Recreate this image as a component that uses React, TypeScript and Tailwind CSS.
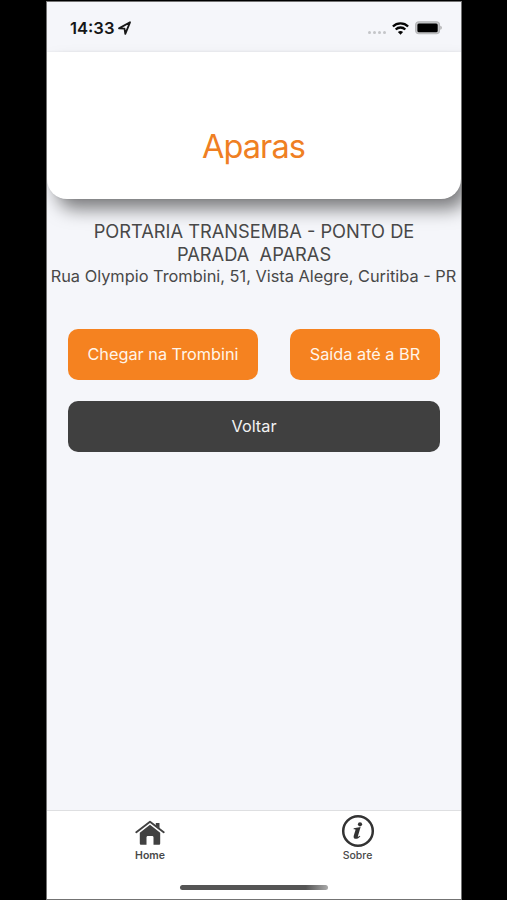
import React from "react";

function StatusBar() {
  return (
    <header className="flex h-[50px] shrink-0 items-center justify-between bg-[#f5f6fa] pt-[2px] pr-[19px] pl-[23px]">
      <div className="flex items-center gap-1">
        <span className="text-[16.6px] leading-5 font-semibold text-[#171717]">14:33</span>
        <svg width="13" height="14" viewBox="0 0 13 14" fill="none" stroke="#171717" strokeWidth="1.8" strokeLinejoin="round">
          <path d="M1 7.4 12 1.3 7.3 12.8 6.5 7.6Z" />
        </svg>
      </div>
      <div className="flex items-center">
        <div className="mt-2 mr-[6px] flex gap-[2px]">
          <i className="size-[3px] rounded-full bg-[#c4c5c8]" />
          <i className="size-[3px] rounded-full bg-[#c4c5c8]" />
          <i className="size-[3px] rounded-full bg-[#c4c5c8]" />
          <i className="size-[3px] rounded-full bg-[#c4c5c8]" />
        </div>
        <svg className="mr-[6px]" width="17" height="13" viewBox="0 0 17 13" fill="none" stroke="#050505" strokeWidth="2.3">
          <path d="M.9 4.5a10.8 10.8 0 0 1 15.2 0M3.7 7.5a6.8 6.8 0 0 1 9.6 0" />
          <path d="M8.5 12.7 5.9 10.1a3.8 3.8 0 0 1 5.2 0Z" fill="#050505" stroke="none" />
        </svg>
        <svg width="27" height="14" viewBox="0 0 27 14">
          <rect x=".6" y=".8" width="23.9" height="12" rx="3.2" fill="#c5c6c8" stroke="#b5b6b8" strokeWidth="1.1" />
          <rect x="2.4" y="2.4" width="20.3" height="8.9" rx="1.5" fill="#000" />
          <path d="M25.3 4.8c2 .7 2 3.3 0 4Z" fill="#aaa" />
        </svg>
      </div>
    </header>
  );
}

function HomeIcon() {
  return (
    <svg width="30" height="26" viewBox="0 0 30 26" fill="#414141">
      <path d="M20.8 3h3.7v5.5l-3.7-3Z" />
      <path d="M1.3 12.2 15 1.8l13.7 10.4" fill="none" stroke="#414141" strokeWidth="1.9" strokeLinecap="round" strokeLinejoin="round" />
      <path d="M15 4.7 25.2 12.7v10.6c0 1-.5 1.5-1.5 1.5h-5.2v-7.2c0-1-.5-1.5-1.5-1.5h-4c-1 0-1.5.5-1.5 1.5v7.2H6.3c-1 0-1.5-.5-1.5-1.5V12.7Z" />
    </svg>
  );
}

function InfoIcon() {
  return (
    <svg width="34" height="34" viewBox="0 0 34 34">
      <circle cx="17" cy="17" r="14.8" fill="none" stroke="#333" strokeWidth="2.5" />
      <circle cx="19" cy="10.3" r="2.1" fill="#333" />
      <path d="m12.7 14.3 6.9-1.2-2.7 9.1c-.3 1 .4 1 1.7-.5l.8.6c-2.4 3.4-8 3.7-6.6-.8l1.7-5.4c.2-.7-.3-.9-1.9-.8Z" fill="#333" />
    </svg>
  );
}

export default function App() {
  return (
    <div className="h-[900px] w-[507px] overflow-hidden bg-black pt-[1px] pl-[46px] font-['Inter','Liberation_Sans',sans-serif] text-[#484848]">
      <main className="flex h-[899px] w-[416px] flex-col overflow-hidden border border-[#737373] bg-[#f5f6fa]">
        <StatusBar />
        <div className="flex h-[147px] shrink-0 justify-center rounded-b-[20px] bg-white pt-[75px] shadow-[8px_12px_18px_-2px_rgba(0,0,0,0.5),0_0_3px_rgba(0,0,0,0.08)]">
          <h1 className="pr-[1px] text-[32.5px] leading-10 font-normal tracking-[-0.95px] whitespace-nowrap text-[#ef7f23]">Aparas</h1>
        </div>
        <section className="mt-[21px] flex h-[89px] shrink-0 flex-col items-center whitespace-pre">
          <p className="text-[18.25px] leading-[23px]">PORTARIA TRANSEMBA - PONTO DE</p>
          <p className="text-[18.25px] leading-[23px]">PARADA  APARAS</p>
          <p className="pr-[1px] text-[16.35px] leading-[21px]">Rua Olympio Trombini, 51, Vista Alegre, Curitiba - PR</p>
        </section>
        <div className="mt-5 flex flex-col gap-[21px] pr-[21px] pl-[21px]">
          <div className="flex justify-between text-[16.3px] text-[#fff5e9]">
            <button className="h-[51px] w-[190px] rounded-[10px] bg-[#f58220] whitespace-nowrap">Chegar na Trombini</button>
            <button className="h-[51px] w-[150px] rounded-[10px] bg-[#f58220] whitespace-nowrap">Saída até a BR</button>
          </div>
          <button className="h-[51px] rounded-[10px] bg-[#404040] text-[16.3px] text-[#f2f2f2]">Voltar</button>
        </div>
        <footer className="mt-auto flex h-[89px] shrink-0 flex-col items-center border-t border-[#dedfe1] bg-white">
          <nav className="grid h-[74px] w-full grid-cols-2">
            <a className="flex flex-col items-center pt-[9px] pr-[1px]">
              <HomeIcon />
              <span className="mt-[2px] text-[10.5px] leading-[15px] font-semibold">Home</span>
            </a>
            <a className="flex flex-col items-center pt-[3px]">
              <InfoIcon />
              <span className="text-[10.5px] leading-[15px] font-medium">Sobre</span>
            </a>
          </nav>
          <div className="h-[5px] w-[148px] rounded-full bg-linear-to-r from-[#555] from-85% to-[#aaa]" />
        </footer>
      </main>
    </div>
  );
}
